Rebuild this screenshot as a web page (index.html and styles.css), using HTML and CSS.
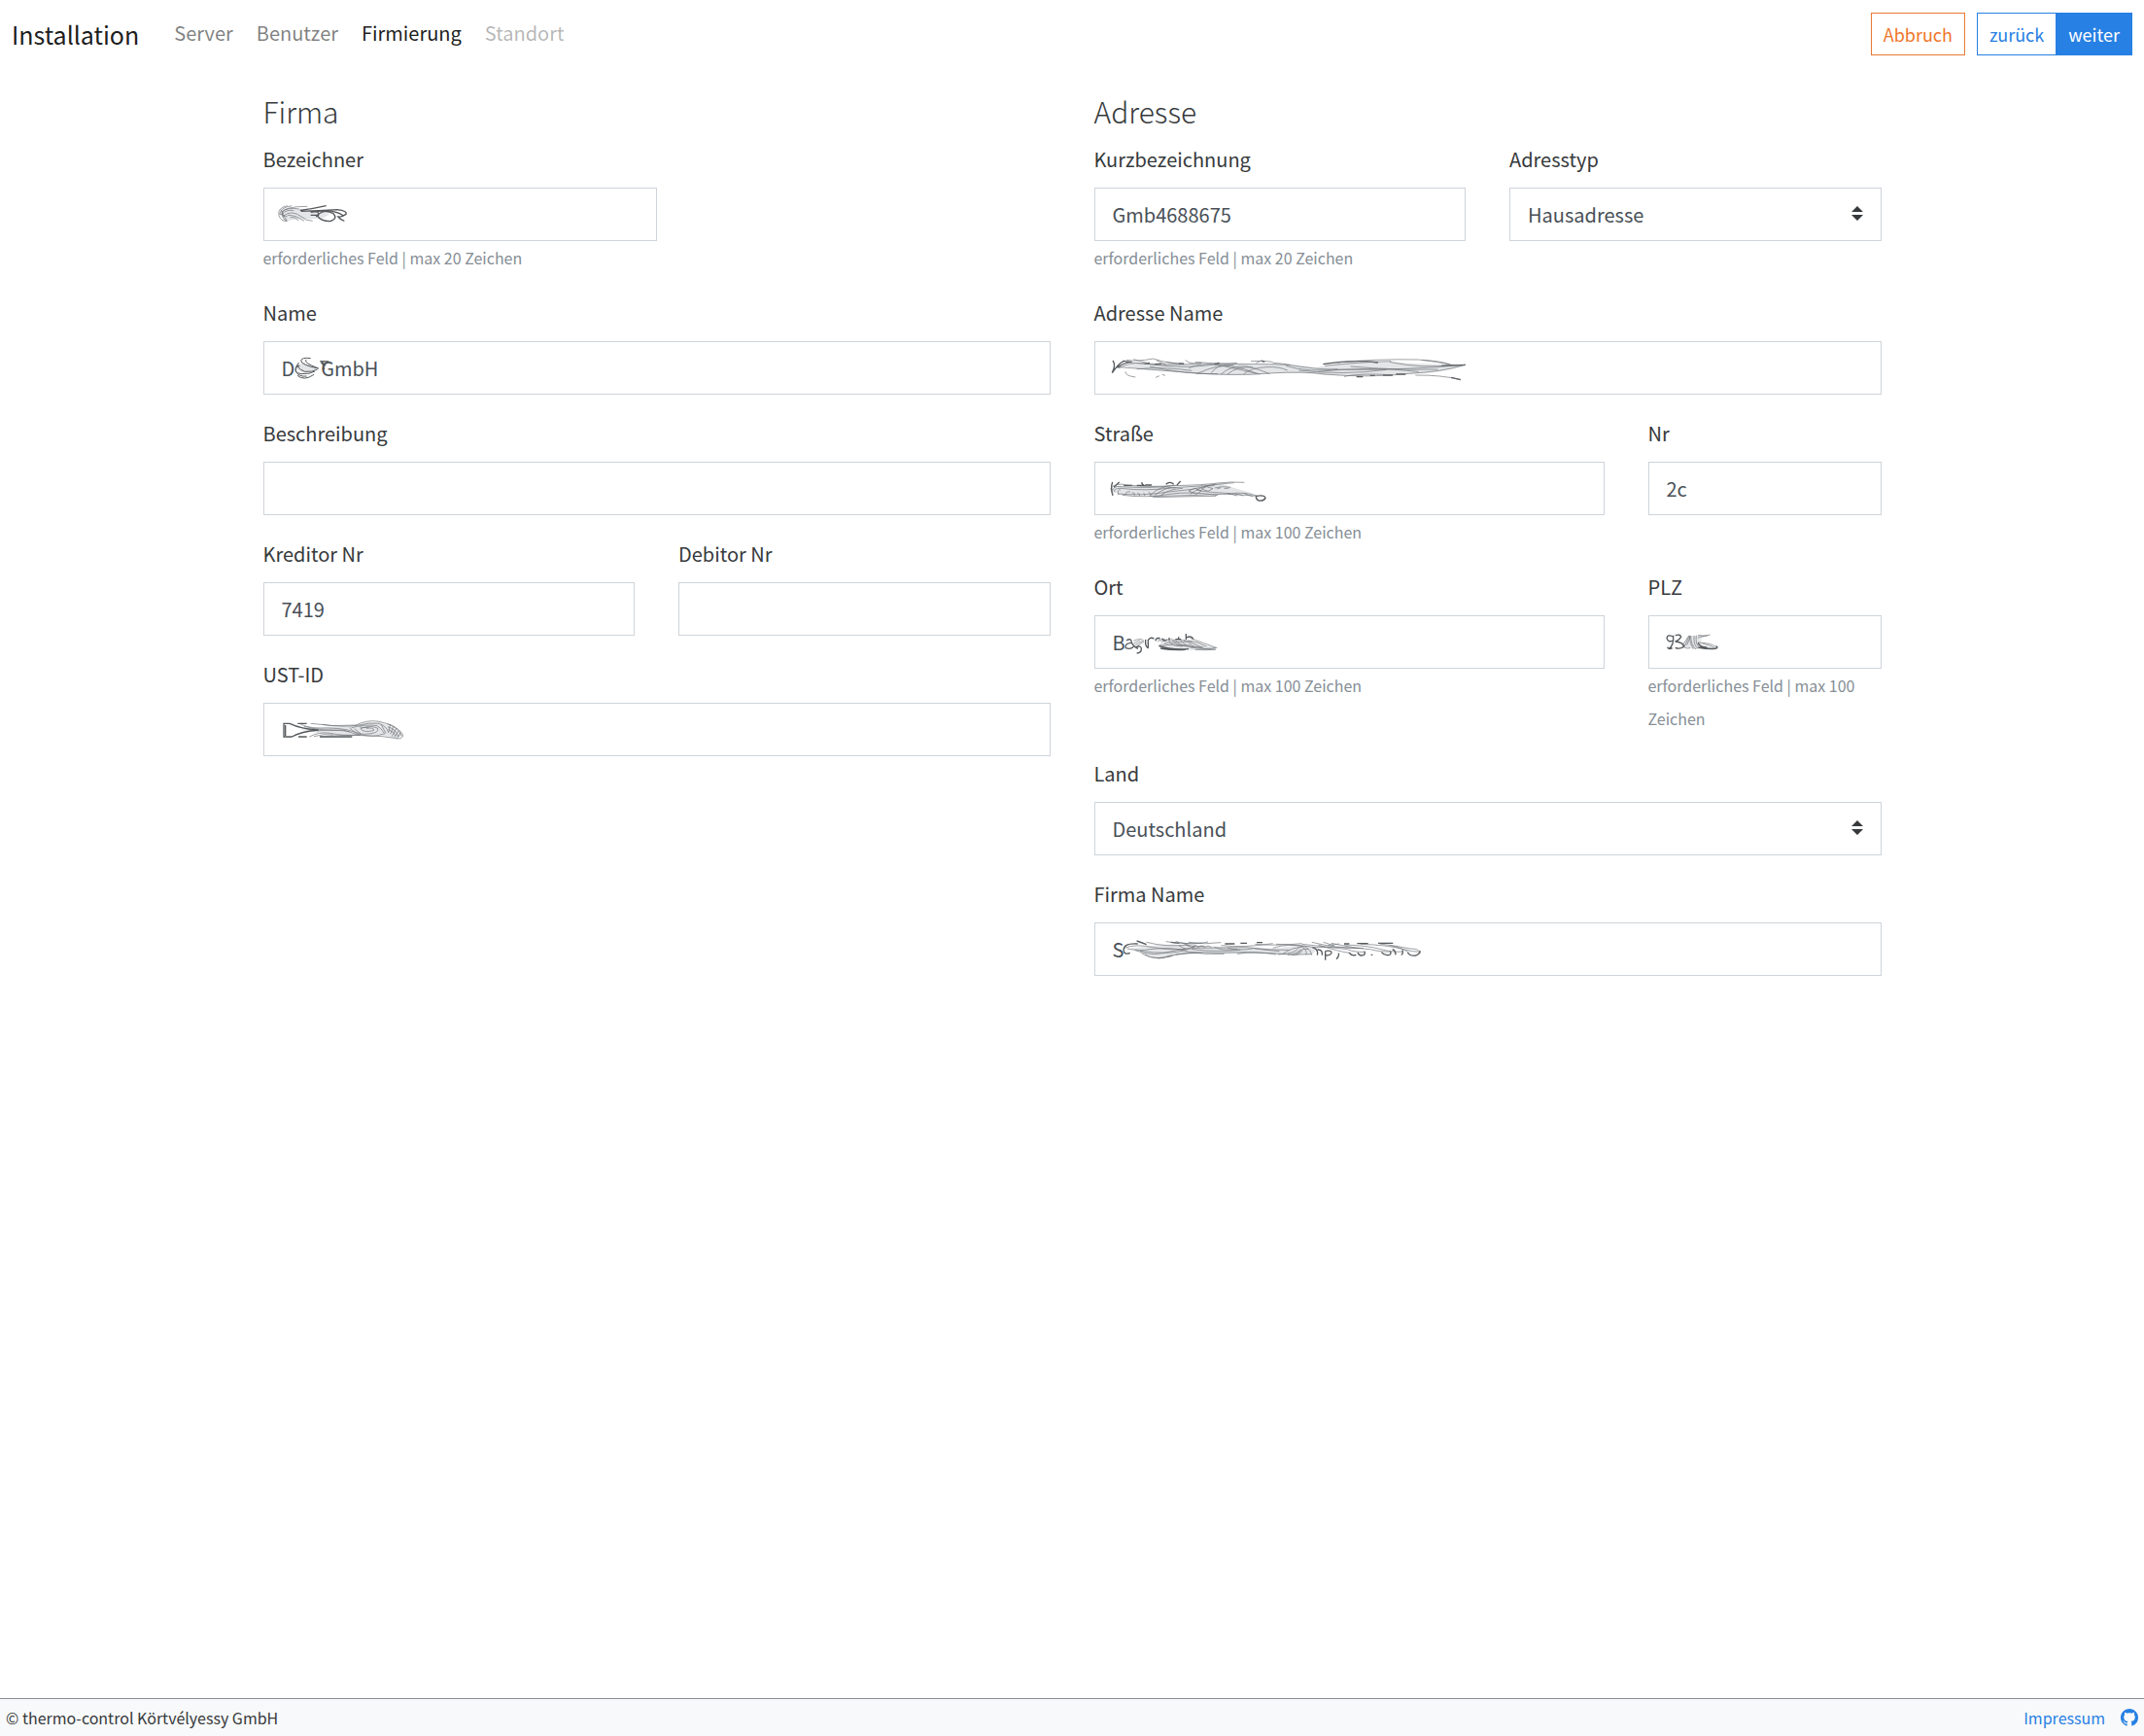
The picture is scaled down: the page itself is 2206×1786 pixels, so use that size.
FILE: index.html
```html
<!DOCTYPE html>
<html lang="de">
<head>
    <meta charset="UTF-8">
    <meta name="viewport" content="width=device-width, initial-scale=1.0">
    <title>Installation - Firmierung</title>
    <link rel="stylesheet" href="styles.css">
</head>
<body>
    <header class="navbar">
        <a class="navbar-brand" href="#">Installation</a>
        <nav class="navbar-nav">
            <a class="nav-link" href="#server">Server</a>
            <a class="nav-link" href="#benutzer">Benutzer</a>
            <a class="nav-link active" href="#firmierung">Firmierung</a>
            <a class="nav-link disabled" href="#standort">Standort</a>
        </nav>
        <div class="navbar-actions">
            <button type="button" class="btn btn-cancel">Abbruch</button>
            <div class="btn-group">
                <button type="button" class="btn btn-back">zurück</button>
                <button type="submit" class="btn btn-next" form="companyForm">weiter</button>
            </div>
        </div>
    </header>

    <main>
        <form id="companyForm" class="container">
            <section class="column">
                <h3>Firma</h3>
                <div class="row">
                    <div class="form-group">
                        <label for="bezeichner">Bezeichner</label>
                        <div class="control half">
                            <input type="text" id="bezeichner">
                            <svg class="scribble" width="100" height="54" viewBox="34 40 300 162" aria-hidden="true">
                                <path class="haze" d="M82 120Q90 98 135 104L200 112 240 122 215 136 130 138 100 144Z"/>
                                <path d="M108 96Q76 103 82 126Q88 145 106 143M122 96Q84 102 87 120M170 98Q96 98 92 118Q92 138 108 143M90 115Q108 100 145 106M90 123Q106 106 128 111M94 130Q118 105 154 131Q165 143 186 143M108 125Q132 124 160 143M116 132Q134 130 142 143M88 108l18 35M82 120l26 10"/>
                                <path class="bold" d="M147 110Q190 105 228 96M150 113Q205 112 262 108Q294 112 289 122Q274 132 265 130Q272 140 284 143M180 125h24q3-10-14-13M197 130Q216 104 250 120Q265 135 240 144Q210 144 200 126M220 110Q262 112 280 126M180 116l50-6"/>
                            </svg>
                        </div>
                        <small class="help">erforderliches Feld | max 20 Zeichen</small>
                    </div>
                </div>
                <div class="row">
                    <div class="form-group">
                        <label for="name">Name</label>
                        <div class="control">
                            <input type="text" id="name" value="D&nbsp;&nbsp;&nbsp;&nbsp;&nbsp;&nbsp;GmbH">
                            <svg class="scribble" width="80" height="54" viewBox="34 514 240 162" aria-hidden="true">
                                <path class="haze" d="M132 590Q138 610 160 612L200 600 160 580Z"/>
                                <path class="medium" d="M180 567Q153 563 150 574Q151 588 204 598M166 571Q156 580 204 598M143 580Q132 596 162 608Q186 610 201 601M139 586Q122 612 151 615Q178 616 193 607M146 590Q132 591 134 607Q143 625 168 622M139 620Q160 638 190 617"/>
                                <path class="bold" d="M209 576L236 577M211 578Q220 584 222 602M213 576L226 590"/>
                            </svg>
                        </div>
                    </div>
                </div>
                <div class="row">
                    <div class="form-group">
                        <label for="beschreibung">Beschreibung</label>
                        <div class="control">
                            <input type="text" id="beschreibung">
                        </div>
                    </div>
                </div>
                <div class="row">
                    <div class="form-group col-6">
                        <label for="kreditor">Kreditor Nr</label>
                        <div class="control">
                            <input type="text" id="kreditor" value="7419">
                        </div>
                    </div>
                    <div class="form-group col-6">
                        <label for="debitor">Debitor Nr</label>
                        <div class="control">
                            <input type="text" id="debitor">
                        </div>
                    </div>
                </div>
                <div class="row">
                    <div class="form-group">
                        <label for="ustid">UST-ID</label>
                        <div class="control">
                            <input type="text" id="ustid">
                            <svg class="scribble" width="160" height="54" viewBox="34 553 480 162" aria-hidden="true">
                                <path class="haze" d="M150 636L210 628 300 626 350 614 395 612 455 640 462 656 440 662 390 652 300 654 220 650Z"/>
                                <path class="bold" d="M115 617H97V658H122M102 622V655M115 617Q150 634 205 637Q150 642 122 658M140 617h28M142 658h26M208 658h100"/>
                                <path d="M150 620Q180 634 235 631Q300 632 330 650Q370 662 410 648M180 617Q250 628 320 622Q350 606 385 610Q420 616 440 630Q462 640 465 655Q460 668 438 662Q400 655 360 655Q290 650 210 658M215 620Q280 630 330 622Q360 613 390 617Q415 625 420 645M160 626Q220 642 280 637Q310 646 332 654M200 640Q245 633 300 642M176 658Q205 642 240 647Q280 656 330 652M190 657Q220 648 250 652M300 629Q312 648 345 650Q397 648 386 631Q361 621 334 633Q340 646 374 639Q378 628 352 632M306 630Q350 618 385 624Q400 633 407 647M315 633l20 16M330 626q5 5 30 3M398 620Q405 635 412 647M416 618Q450 625 461 656M418 627Q442 634 452 659M420 636Q440 644 442 655M426 619l-6 26M436 625l-10 25M444 632l-13 25M451 640l-12 20M458 645l-12 18"/>
                            </svg>
                        </div>
                    </div>
                </div>
            </section>

            <section class="column">
                <h3>Adresse</h3>
                <div class="row">
                    <div class="form-group col-6">
                        <label for="kurzbezeichnung">Kurzbezeichnung</label>
                        <div class="control">
                            <input type="text" id="kurzbezeichnung" value="Gmb4688675">
                        </div>
                        <small class="help">erforderliches Feld | max 20 Zeichen</small>
                    </div>
                    <div class="form-group col-6">
                        <label for="adresstyp">Adresstyp</label>
                        <div class="control">
                            <select id="adresstyp">
                                <option>Hausadresse</option>
                            </select>
                            <svg class="caret" width="12" height="15" viewBox="0 0 12 15" aria-hidden="true"><path d="M0 6l6-6 6 6zM0 9h12l-6 6z"/></svg>
                        </div>
                    </div>
                </div>
                <div class="row">
                    <div class="form-group">
                        <label for="adressename">Adresse Name</label>
                        <div class="control">
                            <input type="text" id="adressename">
                            <svg class="scribble" width="400" height="54" viewBox="49 784 1200 162" aria-hidden="true">
                                <path class="haze" d="M140 862Q230 842 340 857Q430 842 540 857Q640 850 730 866Q850 842 960 848Q1080 858 1195 856Q1140 880 1040 884Q880 894 760 888Q640 876 560 886Q430 894 330 880Q220 876 140 862Z"/>
                                <path class="bold" d="M106 844Q116 858 104 882Q122 854 140 845Q150 848 165 848Q135 852 120 866M204 854l16-3M236 855l20-1M310 853l16 1M420 855l15-4M565 844l10 4M755 855Q850 840 925 850M1120 860L1195 857M1150 896L1180 903M858 894h20M900 890h15M940 889h30M980 886h30"/>
                                <path d="M124 867Q170 843 232 857Q330 869 420 856Q570 853 650 857Q730 872 820 872Q1000 874 1195 857M124 864Q240 873 330 880Q480 893 590 883Q700 876 760 886Q900 898 1020 884Q1120 879 1195 857M148 842Q180 848 230 838Q290 857 325 852M170 840l45 12M240 843l30 13M270 848l45 6M160 850Q280 862 380 852M330 843Q350 858 380 851M360 848Q450 857 490 851M532 846Q570 843 600 848M548 852Q572 838 570 850M600 851Q640 854 655 858M145 878Q144 891 176 895M238 896l12-5M258 887l10 3M340 867Q380 850 430 857Q490 870 560 886M410 882Q425 855 470 861Q515 869 552 884M440 886Q470 858 520 862Q545 866 590 885M460 886Q490 860 538 865M365 885Q430 854 480 858M510 885Q530 867 580 864Q620 862 645 874M180 870Q260 862 350 875M220 862Q330 887 430 885M760 860Q870 848 965 846M800 850Q920 838 1050 841Q1110 848 1160 858M740 878Q890 860 1050 878M820 893Q870 882 960 888M960 848Q1060 870 1160 857M640 860Q710 882 800 870M680 874Q820 890 950 872M1060 842Q1110 844 1145 855M840 862Q980 874 1110 871M1040 889Q1120 888 1180 903"/>
                            </svg>
                        </div>
                    </div>
                </div>
                <div class="row">
                    <div class="form-group col-8">
                        <label for="strasse">Straße</label>
                        <div class="control">
                            <input type="text" id="strasse">
                            <svg class="scribble" width="200" height="54" viewBox="49 166 600 162" aria-hidden="true">
                                <path class="haze" d="M98 252L120 240 220 240 330 243 440 232 470 244 540 264 460 266 340 270 210 270 130 268Z"/>
                                <path class="bold" d="M105 229Q98 248 106 270M109 245L126 229M140 239h26M180 239h22q-9-6-5 -9M206 238h20M270 236Q282 224 294 236M303 239L315 226M548 272Q576 268 577 278Q572 288 557 286Q546 282 549 272"/>
                                <path d="M98 250Q113 229 150 238Q220 246 300 239M104 258Q107 239 130 243Q230 249 290 240Q390 238 430 232Q470 227 512 230M112 261Q106 248 130 248Q210 258 290 246Q390 242 480 231M120 265Q200 272 270 260Q350 255 425 235M135 269Q210 279 280 266Q350 256 430 270M100 253q8 4 5 18M124 268Q118 251 130 253M146 268Q144 257 160 259M165 261q12 2 8 9M182 262q10 3 6 9M200 262q7 4 4 9M216 260q9 4 8 9M220 271Q255 237 285 245M236 269Q270 242 300 247M255 269Q280 250 322 248M220 273Q330 271 420 267Q470 264 548 272M230 276Q330 273 425 272M345 266Q380 238 420 240M364 254Q410 262 470 264Q515 259 550 271M340 256l20-8 20 8-16 10zM380 250l15-7 20 6-15 8zM420 247Q440 240 470 245M427 250l13-4M450 249l15-2M460 263l30 8M485 265l25 6M510 264l28 9"/>
                            </svg>
                        </div>
                        <small class="help">erforderliches Feld | max 100 Zeichen</small>
                    </div>
                    <div class="form-group col-4">
                        <label for="nr">Nr</label>
                        <div class="control">
                            <input type="text" id="nr" value="2c">
                        </div>
                    </div>
                </div>
                <div class="row">
                    <div class="form-group col-8">
                        <label for="ort">Ort</label>
                        <div class="control">
                            <input type="text" id="ort" value="B">
                            <svg class="scribble" width="150" height="54" viewBox="49 643 450 162" aria-hidden="true">
                                <path class="haze" d="M250 738L300 726 350 722 425 744 400 750 260 750Z"/>
                                <path class="bold" d="M148 721Q164 711 164 728Q174 743 184 746M162 728Q142 730 146 744Q160 750 170 740M178 741Q195 735 194 748Q194 759 180 760M207 718Q205 740 216 745M215 744V719Q225 708 233 716M238 722Q240 710 252 714M258 714Q262 726 274 718M280 722V712M332 700V719M333 712Q348 704 355 717M299 717h18M309 710v8M248 737Q280 750 340 747M253 745Q295 752 330 749"/>
                                <path d="M170 722q18-8 28-4M170 730l20-10M174 735l28-15M180 738l22-14M236 718q10-8 20 5M244 724Q265 710 270 721M255 727Q285 710 300 722M265 728Q300 717 330 720M250 740Q290 728 340 738M345 714Q390 730 425 743M335 720Q370 724 395 739M325 722Q355 728 380 742M300 721Q320 742 355 741M315 722Q340 746 385 741M280 724Q295 745 330 735M290 723l30 17M340 732Q370 747 422 749M345 742Q390 750 428 743M250 735Q310 722 350 724M360 749Q390 752 424 748"/>
                            </svg>
                        </div>
                        <small class="help">erforderliches Feld | max 100 Zeichen</small>
                    </div>
                    <div class="form-group col-4">
                        <label for="plz">PLZ</label>
                        <div class="control">
                            <input type="text" id="plz">
                            <svg class="scribble" width="90" height="54" viewBox="109 643 270 162" aria-hidden="true">
                                <path class="haze" d="M216 740L230 708 262 705 290 704 270 718 275 735 318 744 255 748Z"/>
                                <path class="bold" d="M185 709Q168 700 166 714Q170 728 185 721M186 705Q188 738 172 746M192 705Q208 700 210 710Q204 720 192 724Q212 725 220 738Q208 750 192 743M168 741Q170 750 183 744M262 728Q270 743 290 742M318 738Q328 745 314 746Q295 748 263 742"/>
                                <path d="M215 735L235 705M222 737L236 707Q236 730 248 747M228 735L240 706M240 706Q240 735 256 748M250 706Q248 738 262 745M257 705Q254 730 264 740M262 704Q280 710 300 703M262 712Q276 706 292 706M262 727Q300 728 318 740M219 742Q230 747 238 744M214 728Q212 740 220 742M275 730Q300 735 320 746"/>
                            </svg>
                        </div>
                        <small class="help">erforderliches Feld | max 100 Zeichen</small>
                    </div>
                </div>
                <div class="row">
                    <div class="form-group">
                        <label for="land">Land</label>
                        <div class="control">
                            <select id="land">
                                <option>Deutschland</option>
                            </select>
                            <svg class="caret" width="12" height="15" viewBox="0 0 12 15" aria-hidden="true"><path d="M0 6l6-6 6 6zM0 9h12l-6 6z"/></svg>
                        </div>
                    </div>
                </div>
                <div class="row">
                    <div class="form-group">
                        <label for="firmaname">Firma Name</label>
                        <div class="control">
                            <input type="text" id="firmaname" value="S">
                            <svg class="scribble" width="360" height="54" viewBox="49 511 1080 162" aria-hidden="true">
                                <path class="haze" d="M160 592Q240 576 330 580L440 586 600 592 690 580 740 590 720 610 600 608 450 608 340 606 250 622 200 606Z"/>
                                <path class="bold" d="M183 577Q135 574 140 600Q144 612 159 605M180 568l30 11M452 577h30M500 575h20M550 573h18M285 572l26 3M722 588Q742 594 737 612M738 595Q754 594 752 612M762 599V627M764 599Q784 596 780 607Q776 614 764 612M803 606Q805 617 796 624M835 604Q844 616 857 611M862 604Q866 616 880 612Q887 607 882 600M903 611h5M935 603Q945 615 960 611Q967 607 962 600M978 611Q981 599 969 594M996 611Q1003 610 1000 596M1016 604Q1024 616 1042 613Q1057 606 1053 598M820 577h16M860 576h34M925 575h46"/>
                                <path d="M141 590Q180 576 230 588Q300 600 370 590Q450 589 520 588Q600 597 650 596M150 592Q190 600 220 594Q290 585 335 600M175 597Q220 613 250 607Q310 596 360 587M195 607Q230 624 260 620Q300 606 380 605M205 610Q235 630 290 614M190 599Q280 612 330 597M210 572Q270 588 340 580M270 570Q330 580 380 574M300 570Q350 583 400 571M320 574Q350 589 390 584M340 572Q390 580 440 573M350 588q10-12 20 0q10-10 20 0q12-10 20 1M310 583l26 12M330 580l26 10M300 610Q360 600 430 605Q520 600 600 606Q660 614 720 609M330 600Q390 612 450 608M350 594Q430 603 500 596M420 587Q440 599 490 594M460 590Q500 600 540 591Q580 597 620 600M490 608Q540 598 610 610M440 582Q510 590 600 576M545 578Q610 584 690 576M610 578Q680 580 730 588Q800 584 880 591M600 590Q650 574 700 586Q717 595 720 612M615 610Q670 608 680 589M630 608Q660 588 690 587Q706 594 703 611M646 611Q672 609 688 594M660 612Q686 609 690 599M672 611Q690 588 710 594M690 578Q780 588 830 594Q850 603 883 602M720 572Q800 592 870 591M740 580Q800 600 835 605M756 572l34 11M770 582l35-5M780 575Q850 590 900 594Q938 603 960 601M820 580Q890 582 930 593Q970 604 1000 601M870 578Q950 580 1000 593Q1030 602 1054 602M930 577Q980 583 1024 592Q1054 592 1055 606M960 582Q998 588 1020 604M245 622l20-2M270 618l20-4"/>
                            </svg>
                        </div>
                    </div>
                </div>
            </section>
        </form>
    </main>

    <footer class="footer">
        <span>© thermo-control Körtvélyessy GmbH</span>
        <div class="footer-links">
            <a href="#impressum">Impressum</a>
            <a href="#github" aria-label="GitHub">
                <svg class="github" width="18" height="18" viewBox="0 0 16 16" aria-hidden="true"><path d="M8 0C3.58 0 0 3.58 0 8c0 3.54 2.29 6.53 5.47 7.59.4.07.55-.17.55-.38 0-.19-.01-.82-.01-1.49-2.01.37-2.53-.49-2.69-.94-.09-.23-.48-.94-.82-1.13-.28-.15-.68-.52-.01-.53.63-.01 1.08.58 1.23.82.72 1.21 1.87.87 2.33.66.07-.52.28-.87.51-1.07-1.78-.2-3.64-.89-3.64-3.95 0-.87.31-1.59.82-2.15-.08-.2-.36-1.02.08-2.12 0 0 .67-.21 2.2.82.64-.18 1.32-.27 2-.27s1.36.09 2 .27c1.53-1.04 2.2-.82 2.2-.82.44 1.1.16 1.92.08 2.12.51.56.82 1.27.82 2.15 0 3.07-1.87 3.75-3.65 3.95.29.25.54.73.54 1.48 0 1.07-.01 1.93-.01 2.2 0 .21.15.46.55.38A8.01 8.01 0 0 0 16 8c0-4.42-3.58-8-8-8z"/></svg>
            </a>
        </div>
    </footer>
</body>
</html>
```

FILE: styles.css
```css
* {
    box-sizing: border-box;
}
body {
    margin: 0;
    min-height: 100vh;
    display: flex;
    flex-direction: column;
    font-family: "Source Sans Pro", "Noto Sans CJK SC", sans-serif;
    font-size: 20px;
    line-height: 34px;
    color: #373a3c;
    background-color: #fff;
}
a {
    color: #2780e3;
    text-decoration: none;
}
.navbar {
    display: flex;
    align-items: center;
    padding: 13px 12px;
}
.navbar-brand {
    margin-right: 24px;
    font-size: 25px;
    color: rgba(0, 0, 0, 0.9);
}
.navbar-nav {
    display: flex;
    padding-bottom: 2px;
}
.nav-link {
    padding: 0 12px;
    color: rgba(0, 0, 0, 0.5);
}
.nav-link.active {
    color: rgba(0, 0, 0, 0.9);
}
.nav-link.disabled {
    color: rgba(0, 0, 0, 0.3);
}
.navbar-actions {
    display: flex;
    gap: 12px;
    margin-left: auto;
}
.btn-group {
    display: flex;
}
.btn {
    height: 44px;
    padding: 0 12px 1px;
    border: 1px solid #2780e3;
    border-radius: 0;
    background-color: #fff;
    font-family: inherit;
    font-size: 18px;
    color: #2780e3;
    cursor: pointer;
}
.btn-cancel {
    border-color: #e87a35;
    color: #f0762b;
}
.btn-next {
    margin-left: -1px;
    background-color: #2780e3;
    color: #fff;
}
main {
    flex: 1;
}
.container {
    display: grid;
    grid-template-columns: 1fr 1fr;
    gap: 45px;
    max-width: 1665px;
    margin: 0 auto;
    padding-top: 24px;
}
h3 {
    margin: 0 0 13px;
    font-size: 30px;
    font-weight: 300;
    line-height: 40px;
}
.row {
    display: grid;
    grid-template-columns: repeat(12, 1fr);
    column-gap: 45px;
}
.form-group {
    grid-column: span 12;
    margin-bottom: 23px;
}
.col-8 {
    grid-column: span 8;
}
.col-6 {
    grid-column: span 6;
}
.col-4 {
    grid-column: span 4;
}
label {
    display: block;
    margin-bottom: 12px;
}
.control {
    position: relative;
    height: 55px;
}
.control.half {
    width: 50%;
}
input,
select {
    display: block;
    width: 100%;
    height: 100%;
    padding: 0 18px;
    border: 1px solid #ced4da;
    border-radius: 0;
    background-color: #fff;
    font-family: inherit;
    font-size: 20px;
    color: #495057;
    appearance: none;
}
.help {
    display: block;
    font-size: 16px;
    color: #868e96;
}
.caret {
    position: absolute;
    top: 19px;
    right: 19px;
    fill: #373a3c;
    pointer-events: none;
}
.scribble {
    position: absolute;
    top: 0;
    left: 0;
    fill: none;
    stroke: #6c7175;
    stroke-width: 2;
    pointer-events: none;
}
.scribble .medium {
    stroke: #55595c;
    stroke-width: 3;
}
.scribble .bold {
    stroke: #55595c;
    stroke-width: 4;
}
.scribble .haze {
    fill: #e3e5e7;
    stroke: none;
}
.footer {
    display: flex;
    justify-content: space-between;
    align-items: center;
    height: 39px;
    padding: 0 6px;
    border-top: 1px solid #868e96;
    background-color: #f8f9fa;
    font-size: 16px;
}
.footer-links {
    display: flex;
    align-items: center;
    gap: 16px;
}
.github {
    display: block;
    fill: #2780e3;
}
```
